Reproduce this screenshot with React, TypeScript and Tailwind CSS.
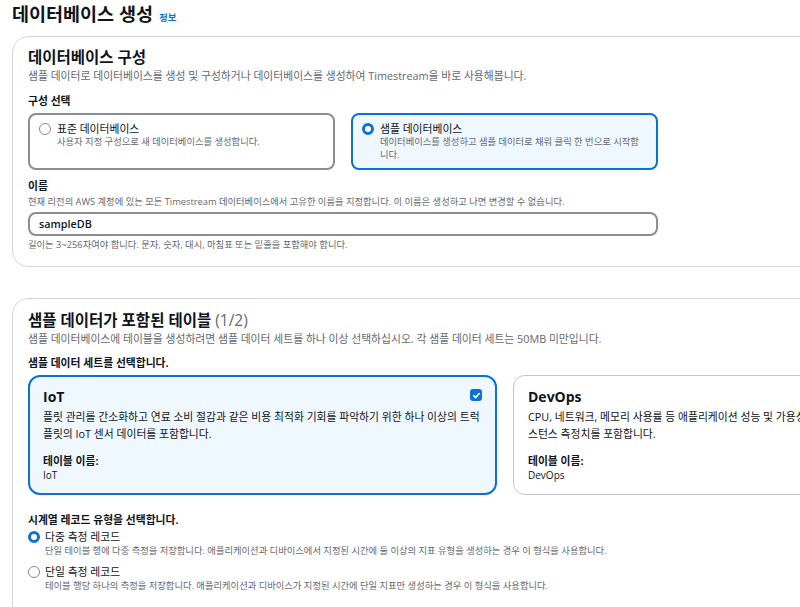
const Radio = ({ checked }: { checked: boolean }) =>
  checked ? (
    <span className="mt-[2px] block h-[12px] w-[12px] shrink-0 rounded-full border-[3.5px] border-[#0972d3] bg-white" />
  ) : (
    <span className="mt-[2px] block h-[12px] w-[12px] shrink-0 rounded-full border-[1.5px] border-[#7d8998] bg-white" />
  );

const Checkbox = () => (
  <span className="flex h-[12px] w-[12px] items-center justify-center rounded-[3px] bg-[#0972d3]">
    <svg width="9" height="9" viewBox="0 0 10 10" fill="none">
      <path d="M2 5.2 4.1 7.3 8 2.8" stroke="white" strokeWidth="1.8" strokeLinecap="round" strokeLinejoin="round" />
    </svg>
  </span>
);

const OptionTile = ({
  checked,
  title,
  desc,
}: {
  checked: boolean;
  title: string;
  desc: string[];
}) => (
  <div
    className={
      checked
        ? 'h-[57px] w-[307px] rounded-[8px] border-2 border-[#0972d3] bg-[#f0f8ff] px-[9px] pt-[6px]'
        : 'h-[57px] w-[307px] rounded-[8px] border-2 border-[#8c8c94] bg-white px-[9px] pt-[6px]'
    }
  >
    <div className="flex gap-[6px]">
      <Radio checked={checked} />
      <div>
        <div className="text-[10.8px] leading-[15px] text-[#0f141a]">{title}</div>
        <div className="text-[9.3px] leading-[12.5px] text-[#656871]">
          {desc.map((d) => (
            <div key={d}>{d}</div>
          ))}
        </div>
      </div>
    </div>
  </div>
);

const DataSetTile = ({
  selected,
  title,
  desc,
  table,
}: {
  selected: boolean;
  title: string;
  desc: string[];
  table: string;
}) => (
  <div
    className={
      selected
        ? 'h-[120px] w-[469px] shrink-0 rounded-[12px] border-2 border-[#0972d3] bg-[#f0f8ff] px-[13px] pt-[10px]'
        : 'h-[120px] w-[469px] shrink-0 rounded-[12px] border border-[#c6c6cd] bg-white px-[14px] pt-[11px]'
    }
  >
    <div className="flex items-start justify-between">
      <div className="text-[14px] font-bold leading-[20px] text-[#0f141a]">{title}</div>
      {selected && (
        <div className="mt-[2px]">
          <Checkbox />
        </div>
      )}
    </div>
    <div className="mt-[1px] whitespace-nowrap text-[10.8px] leading-[17px] text-[#0f141a]">
      {desc.map((d) => (
        <div key={d}>{d}</div>
      ))}
    </div>
    <div className="mt-[11px] text-[10.8px] font-bold leading-[15px] text-[#0f141a]">테이블 이름:</div>
    <div className="text-[10px] leading-[14px] text-[#0f141a]">{table}</div>
  </div>
);

const RecordRadio = ({
  checked,
  title,
  desc,
}: {
  checked: boolean;
  title: string;
  desc: string;
}) => (
  <div className="flex gap-[5px]">
    <Radio checked={checked} />
    <div>
      <div className="text-[10.8px] leading-[15px] text-[#0f141a]">{title}</div>
      <div className="text-[9.3px] leading-[13px] text-[#656871]">{desc}</div>
    </div>
  </div>
);

export default function App() {
  return (
    <div className="h-[607px] w-[800px] overflow-hidden bg-white font-['Open_Sans','Noto_Sans_CJK_KR',sans-serif] text-[#0f141a]">
      <div className="w-[1010px] pl-3">
        <div className="flex h-[36px] items-baseline gap-[6px] pt-[1px]">
          <h1 className="text-[18.5px] font-bold leading-[26px] text-[#0f141a]">데이터베이스 생성</h1>
          <span className="text-[9.5px] font-bold text-[#0972d3]">정보</span>
        </div>

        {/* 데이터베이스 구성 */}
        <div className="h-[231px] w-[986px] rounded-[16px] border border-[#d5d6da] px-[15px] pt-[9px]">
          <h2 className="text-[15.5px] font-bold leading-[22px]">데이터베이스 구성</h2>
          <p className="text-[10.8px] leading-[16px] text-[#656871]">
            샘플 데이터로 데이터베이스를 생성 및 구성하거나 데이터베이스를 생성하여 Timestream을 바로 사용해봅니다.
          </p>
          <div className="mt-[9px] text-[10.8px] font-bold leading-[16px]">구성 선택</div>
          <div className="mt-[4px] flex gap-4">
            <OptionTile checked={false} title="표준 데이터베이스" desc={['사용자 지정 구성으로 새 데이터베이스를 생성합니다.']} />
            <OptionTile
              checked={true}
              title="샘플 데이터베이스"
              desc={['데이터베이스를 생성하고 샘플 데이터로 채워 클릭 한 번으로 시작합', '니다.']}
            />
          </div>
          <div className="mt-[8px] text-[10.8px] font-bold leading-[16px]">이름</div>
          <p className="text-[9.3px] leading-[15px] text-[#656871]">
            현재 리전의 AWS 계정에 있는 모든 Timestream 데이터베이스에서 고유한 이름을 지정합니다. 이 이름은 생성하고 나면 변경할 수 없습니다.
          </p>
          <div className="mt-[3px] flex h-[24px] w-[630px] items-center rounded-[8px] border-2 border-[#8c8c94] px-[9px] text-[10.8px] font-semibold">
            sampleDB
          </div>
          <p className="mt-[1px] text-[9.3px] leading-[15px] text-[#656871]">
            길이는 3~256자여야 합니다. 문자, 숫자, 대시, 마침표 또는 밑줄을 포함해야 합니다.
          </p>
        </div>

        {/* 샘플 데이터가 포함된 테이블 */}
        <div className="mt-[31px] h-[330px] w-[986px] rounded-[16px] border border-[#d5d6da] px-[15px] pt-[10px]">
          <h2 className="text-[15.5px] font-bold leading-[22px]">
            샘플 데이터가 포함된 테이블 <span className="font-normal text-[#656871]">(1/2)</span>
          </h2>
          <p className="text-[10.8px] leading-[16px] text-[#656871]">
            샘플 데이터베이스에 테이블을 생성하려면 샘플 데이터 세트를 하나 이상 선택하십시오. 각 샘플 데이터 세트는 50MB 미만입니다.
          </p>
          <div className="mt-[8px] text-[10.8px] font-bold leading-[16px]">샘플 데이터 세트를 선택합니다.</div>
          <div className="mt-[4px] flex gap-4">
            <DataSetTile
              selected={true}
              title="IoT"
              desc={[
                '플릿 관리를 간소화하고 연료 소비 절감과 같은 비용 최적화 기회를 파악하기 위한 하나 이상의 트럭',
                '플릿의 IoT 센서 데이터를 포함합니다.',
              ]}
              table="IoT"
            />
            <DataSetTile
              selected={false}
              title="DevOps"
              desc={[
                'CPU, 네트워크, 메모리 사용률 등 애플리케이션 성능 및 가용성에 대한 애플리케이션 및 인',
                '스턴스 측정치를 포함합니다.',
              ]}
              table="DevOps"
            />
          </div>
          <div className="mt-[17px] text-[10.8px] font-bold leading-[16px]">시계열 레코드 유형을 선택합니다.</div>
          <div className="mt-[1px]">
            <RecordRadio
              checked={true}
              title="다중 측정 레코드"
              desc="단일 테이블 행에 다중 측정을 저장합니다. 애플리케이션과 디바이스에서 지정된 시간에 둘 이상의 지표 유형을 생성하는 경우 이 형식을 사용합니다."
            />
          </div>
          <div className="mt-[7px]">
            <RecordRadio
              checked={false}
              title="단일 측정 레코드"
              desc="테이블 행당 하나의 측정을 저장합니다. 애플리케이션과 디바이스가 지정된 시간에 단일 지표만 생성하는 경우 이 형식을 사용합니다."
            />
          </div>
        </div>
      </div>
    </div>
  );
}
